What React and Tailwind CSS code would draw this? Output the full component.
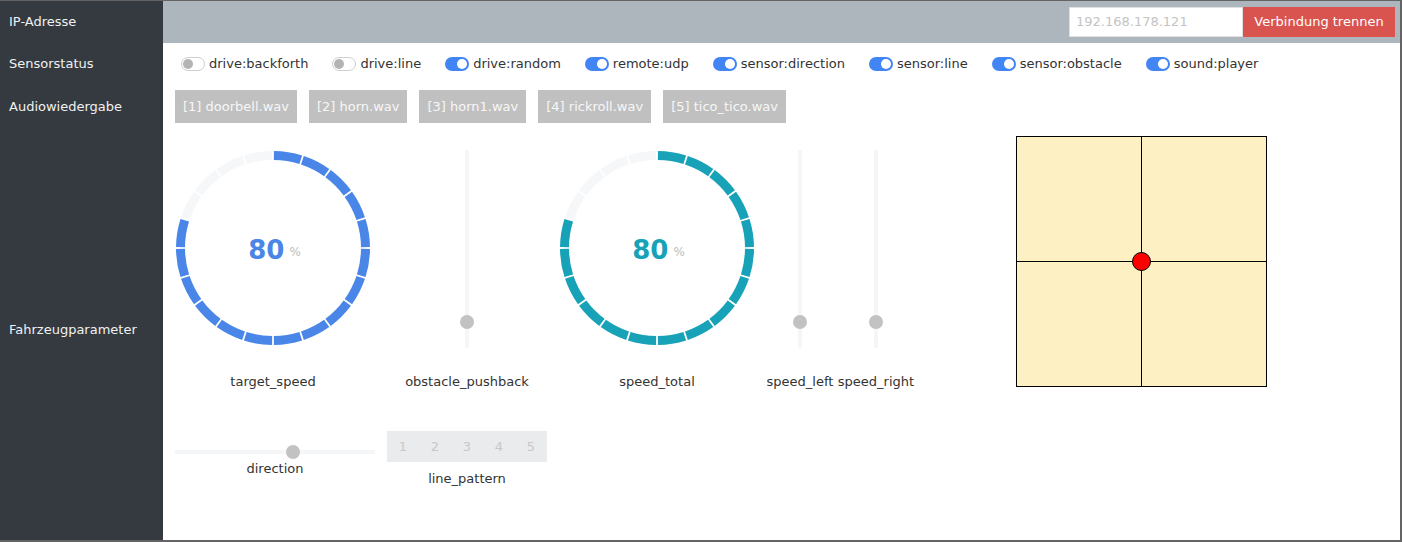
import React from "react";

const font = { fontFamily: '"DejaVu Sans", Verdana, sans-serif' };

const sensors = [
  { name: "drive:backforth", on: false },
  { name: "drive:line", on: false },
  { name: "drive:random", on: true },
  { name: "remote:udp", on: true },
  { name: "sensor:direction", on: true },
  { name: "sensor:line", on: true },
  { name: "sensor:obstacle", on: true },
  { name: "sound:player", on: true },
];

const sounds = ["[1] doorbell.wav", "[2] horn.wav", "[3] horn1.wav", "[4] rickroll.wav", "[5] tico_tico.wav"];

function Toggle({ on }) {
  return on ? (
    <span className="w-[24px] h-[14px] rounded-full bg-[#4285f4] flex items-center justify-end pr-[2px]">
      <span className="w-[10px] h-[10px] rounded-full bg-white" />
    </span>
  ) : (
    <span className="w-[24px] h-[14px] rounded-full bg-white border border-[#cfcfcf] flex items-center pl-[1px]">
      <span className="w-[10px] h-[10px] rounded-full bg-[#b3b3b3]" />
    </span>
  );
}

function Gauge({ value, color }) {
  const c = 98;
  const r = 92.5;
  const segs = 20;
  const filled = Math.round((value / 100) * segs);
  const pt = (deg) => {
    const a = (deg * Math.PI) / 180;
    return `${(c + r * Math.sin(a)).toFixed(2)} ${(c - r * Math.cos(a)).toFixed(2)}`;
  };
  return (
    <div className="relative w-[196px] h-[196px]">
      <svg width="196" height="196" viewBox="0 0 196 196">
        {Array.from({ length: segs }).map((_, i) => {
          const a0 = i * 18 + 0.55;
          const a1 = (i + 1) * 18 - 0.55;
          return (
            <path
              key={i}
              d={`M ${pt(a0)} A ${r} ${r} 0 0 1 ${pt(a1)}`}
              fill="none"
              stroke={i < filled ? color : "#f6f7f9"}
              strokeWidth="9"
            />
          );
        })}
      </svg>
      <div className="absolute inset-0 flex items-center justify-center pl-[3px] pt-[3px]">
        <span className="text-[26px] font-bold leading-none" style={{ color }}>
          {value}
        </span>
        <span className="text-[12px] text-[#bdbdbd] ml-[5px] mt-[4px]">%</span>
      </div>
    </div>
  );
}

function VSlider() {
  return (
    <div className="relative w-[14px] h-[198px] flex justify-center">
      <div className="w-[4px] h-full bg-[#f5f6f8]" />
      <div className="absolute left-0 top-[165px] w-[14px] h-[14px] rounded-full bg-[#c2c2c2]" />
    </div>
  );
}

function Widget({ width, label, children, className = "" }) {
  return (
    <div className={`flex flex-col items-center ${className}`} style={{ width }}>
      <div className="h-[198px] flex items-start justify-center">{children}</div>
      <div className="mt-[26px] text-[13px] leading-[15px] text-[#333] whitespace-nowrap">{label}</div>
    </div>
  );
}

function Joystick() {
  return (
    <div className="relative w-[251px] h-[251px] bg-[#fdf0c2] border border-black">
      <div className="absolute left-[124px] top-0 bottom-0 w-px bg-black" />
      <div className="absolute top-[124px] left-0 right-0 h-px bg-black" />
      <div className="absolute left-[115px] top-[115px] w-[19px] h-[19px] rounded-full bg-[#ff0000] border border-black" />
    </div>
  );
}

export default function App() {
  return (
    <div
      className="h-[542px] w-[1402px] border-t border-r-2 border-b-2 border-[#646464] grid grid-cols-[163px_1fr] grid-rows-[42px_42px_43px_1fr] overflow-hidden"
      style={font}
    >
      <div className="bg-[#343a40] text-[#f1f1f1] text-[13px] flex items-center px-[9px]">IP-Adresse</div>
      <div className="bg-[#adb5bd] flex items-center justify-end pr-[5px]">
        <div className="w-[174px] h-[30px] bg-white border border-[#e0e0e0] flex items-center px-[6px] text-[13px] text-[#c4c4c4]">
          192.168.178.121
        </div>
        <button className="w-[152px] h-[30px] bg-[#d9534f] text-white text-[13px]">Verbindung trennen</button>
      </div>

      <div className="bg-[#343a40] text-[#f1f1f1] text-[13px] flex items-center px-[9px]">Sensorstatus</div>
      <div className="bg-white flex items-center pl-[18px] gap-[24px] text-[13px] text-[#333]">
        {sensors.map((s) => (
          <div key={s.name} className="flex items-center gap-[4px]">
            <Toggle on={s.on} />
            <span>{s.name}</span>
          </div>
        ))}
      </div>

      <div className="bg-[#343a40] text-[#f1f1f1] text-[13px] flex items-center px-[9px]">Audiowiedergabe</div>
      <div className="bg-white flex items-center pl-[12px] gap-[12px]">
        {sounds.map((s) => (
          <div key={s} className="h-[33px] px-[8px] bg-[#c0c0c0] text-[#f7f7f7] text-[13px] flex items-center">
            {s}
          </div>
        ))}
      </div>

      <div className="bg-[#343a40] text-[#f1f1f1] text-[13px] flex items-center px-[9px] pb-[8px]">Fahrzeugparameter</div>
      <div className="bg-white pl-[12px]">
        <div className="flex items-start">
          <Widget width={196} label="target_speed" className="mt-[22px]">
            <Gauge value={80} color="#4a86e8" />
          </Widget>
          <Widget width={130} label="obstacle_pushback" className="mt-[22px] ml-[31px]">
            <VSlider />
          </Widget>
          <Widget width={196} label="speed_total" className="mt-[22px] ml-[27px]">
            <Gauge value={80} color="#17a2b8" />
          </Widget>
          <Widget width={70} label="speed_left" className="mt-[22px] ml-[10px]">
            <VSlider />
          </Widget>
          <Widget width={78} label="speed_right" className="mt-[22px] ml-[2px]">
            <VSlider />
          </Widget>
          <div className="mt-[8px] ml-[101px]">
            <Joystick />
          </div>
        </div>

        <div className="flex items-start mt-[42px]">
          <div className="w-[200px] flex flex-col items-center">
            <div className="relative w-full h-[14px] mt-[14px] flex items-center">
              <div className="w-full h-[4px] bg-[#f5f6f8]" />
              <div className="absolute left-[111px] top-0 w-[14px] h-[14px] rounded-full bg-[#c2c2c2]" />
            </div>
            <div className="mt-[2px] text-[13px] leading-[15px] text-[#333]">direction</div>
          </div>
          <div className="ml-[12px] flex flex-col items-center">
            <div className="w-[160px] h-[31px] bg-[#e9ebec] flex items-center">
              {[1, 2, 3, 4, 5].map((n) => (
                <span key={n} className="w-[32px] text-center text-[13px] text-[#c8c8c8]">
                  {n}
                </span>
              ))}
            </div>
            <div className="mt-[9px] text-[13px] leading-[15px] text-[#333]">line_pattern</div>
          </div>
        </div>
      </div>
    </div>
  );
}
